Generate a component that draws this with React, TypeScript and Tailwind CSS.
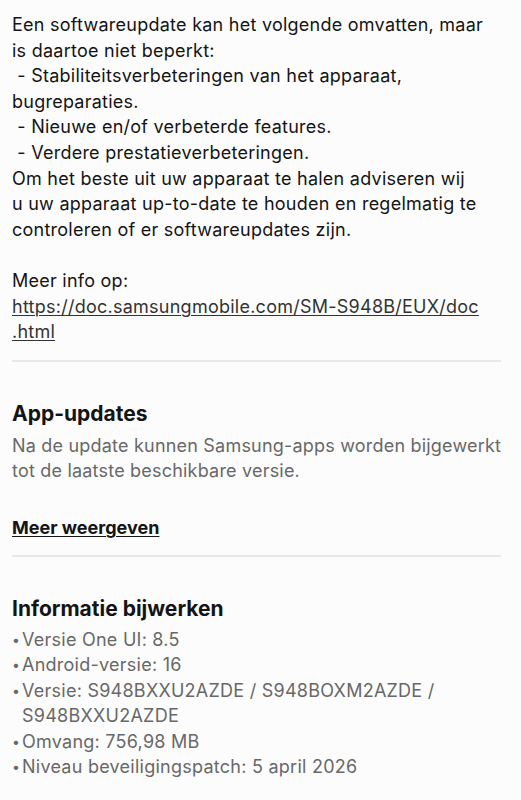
import React from "react";

const font = { fontFamily: "Inter, 'Noto Sans', sans-serif" };

export default function App() {
  const bullets: React.ReactNode[] = [
    "Versie One UI: 8.5",
    "Android-versie: 16",
    <>Versie: S948BXXU2AZDE / S948BOXM2AZDE /<br />S948BXXU2AZDE</>,
    "Omvang: 756,98 MB",
    "Niveau beveiligingspatch: 5 april 2026",
  ];
  return (
    <div className="min-h-[800px] w-full bg-[#fcfcfc] px-3 pt-3 text-[18px] leading-[25.6px] text-[#141414] whitespace-nowrap" style={font}>
      <div className="tracking-[0.25px]">
        <div>Een softwareupdate kan het volgende omvatten, maar</div>
        <div>is daartoe niet beperkt:</div>
        <div>&nbsp;- Stabiliteitsverbeteringen van het apparaat,</div>
        <div>bugreparaties.</div>
        <div>&nbsp;- Nieuwe en/of verbeterde features.</div>
        <div>&nbsp;- Verdere prestatieverbeteringen.</div>
        <div>Om het beste uit uw apparaat te halen adviseren wij</div>
        <div>u uw apparaat up-to-date te houden en regelmatig te</div>
        <div>controleren of er softwareupdates zijn.</div>
        <div>&nbsp;</div>
        <div>Meer info op:</div>
        <div className="text-[#333333] underline decoration-1 underline-offset-2">https://doc.samsungmobile.com/SM-S948B/EUX/doc</div>
        <div className="text-[#333333] underline decoration-1 underline-offset-2">.html</div>
      </div>
      <div className="mt-[15px] mr-[8px] h-[2px] bg-[#e8e8e8]" />
      <div className="mt-[37px] text-[21px] font-bold leading-[30px]">App-updates</div>
      <div className="mt-1 text-[#686868] tracking-[0.2px]">
        <div>Na de update kunnen Samsung-apps worden bijgewerkt</div>
        <div>tot de laatste beschikbare versie.</div>
      </div>
      <div className="mt-[31px] font-bold underline decoration-1 underline-offset-2">Meer weergeven</div>
      <div className="mt-[14px] mr-[8px] h-[2px] bg-[#e8e8e8]" />
      <div className="mt-[37px] text-[21px] font-bold leading-[30px]">Informatie bijwerken</div>
      <ul className="mt-[3px] text-[#686868] tracking-[0.25px]">
        {bullets.map((b, i) => (
          <li key={i} className="flex">
            <span className="w-[10px] shrink-0 text-[14px]">•</span>
            <span>{b}</span>
          </li>
        ))}
      </ul>
    </div>
  );
}
